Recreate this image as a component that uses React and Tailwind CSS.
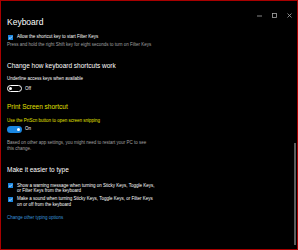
function Checkbox() {
  return (
    <span className="mt-[0.5px] flex h-[5px] w-[5px] shrink-0 items-center justify-center bg-[#1a86e0]">
      <svg viewBox="0 0 10 10" className="h-[5px] w-[5px]">
        <path d="M2 5.2 L4.2 7.3 L8.2 2.8" fill="none" stroke="#fff" strokeWidth="1.4" />
      </svg>
    </span>
  );
}

function Toggle({ on }) {
  return (
    <div className="flex items-center gap-[3px]">
      {on ? (
        <span className="flex h-[7px] w-[15px] items-center justify-end rounded-full bg-[#1a86e0] px-[2px]">
          <span className="h-[3px] w-[3px] rounded-full bg-white" />
        </span>
      ) : (
        <span className="flex h-[7px] w-[15px] items-center rounded-full border border-white px-[1px]">
          <span className="h-[3px] w-[3px] rounded-full bg-white" />
        </span>
      )}
      <span className="text-[4.5px] leading-[6px] text-white">{on ? "On" : "Off"}</span>
    </div>
  );
}

function CheckRow({ children, className = "" }) {
  return (
    <div className={"flex items-start gap-[4px] pl-[1px] " + className}>
      <Checkbox />
      <span className="text-[4.5px] leading-[5.5px] text-white">{children}</span>
    </div>
  );
}

export default function App() {
  return (
    <div className="relative h-[250px] w-[298px] overflow-hidden border border-[#a80000] bg-black font-['Liberation_Sans',Arial,sans-serif]">
      {/* window controls */}
      <div className="absolute right-[5px] top-[12px] flex items-center gap-[10px] text-[#a8a8a8]">
        <svg viewBox="0 0 5 5" className="h-[5px] w-[5px]">
          <path d="M0 3h5" stroke="currentColor" strokeWidth="0.8" />
        </svg>
        <svg viewBox="0 0 5 5" className="h-[5px] w-[5px]">
          <rect x="0.5" y="0.5" width="4" height="4" fill="none" stroke="currentColor" strokeWidth="0.8" />
        </svg>
        <svg viewBox="0 0 5 5" className="h-[5px] w-[5px]">
          <path d="M0.5 0.5L4.5 4.5M4.5 0.5L0.5 4.5" stroke="currentColor" strokeWidth="0.8" />
        </svg>
      </div>

      <div className="absolute right-[1px] top-[142px] h-[102px] w-[2px] bg-[#5c5c5c]" />

      <div className="flex flex-col pl-[6px] pt-[16px]">
        <h1 className="text-[8.5px] font-light leading-[10px] text-white">Keyboard</h1>

        <CheckRow className="mt-[7px]">Allow the shortcut key to start Filter Keys</CheckRow>
        <p className="mt-[2px] text-[4.5px] leading-[6px] text-[#a0a0a0]">
          Press and hold the right Shift key for eight seconds to turn on Filter Keys
        </p>

        <h2 className="mt-[14px] text-[6.5px] leading-[8px] text-white">Change how keyboard shortcuts work</h2>
        <p className="mt-[6.5px] text-[4.5px] leading-[6px] text-white">Underline access keys when available</p>
        <div className="mt-[3px]">
          <Toggle on={false} />
        </div>

        <h2 className="mt-[11px] text-[6.5px] leading-[8px] text-[#e0e000]">Print Screen shortcut</h2>
        <p className="mt-[6.5px] text-[4.5px] leading-[6px] text-[#e0e000]">
          Use the PrtScn button to open screen snipping
        </p>
        <div className="mt-[2px]">
          <Toggle on />
        </div>
        <p className="mt-[7px] text-[4.5px] leading-[6px] text-[#a0a0a0]">
          Based on other app settings, you might need to restart your PC to see
          <br />
          this change.
        </p>

        <h2 className="mt-[14.5px] text-[6.5px] leading-[8px] text-white">Make it easier to type</h2>
        <CheckRow className="mt-[8.5px]">
          Show a warning message when turning on Sticky Keys, Toggle Keys,
          <br />
          or Filter Keys from the keyboard
        </CheckRow>
        <CheckRow className="mt-[2.5px]">
          Make a sound when turning Sticky Keys, Toggle Keys, or Filter Keys
          <br />
          on or off from the keyboard
        </CheckRow>

        <a className="mt-[7.5px] text-[4.5px] leading-[6px] text-[#3a96dd]">Change other typing options</a>
      </div>
    </div>
  );
}
